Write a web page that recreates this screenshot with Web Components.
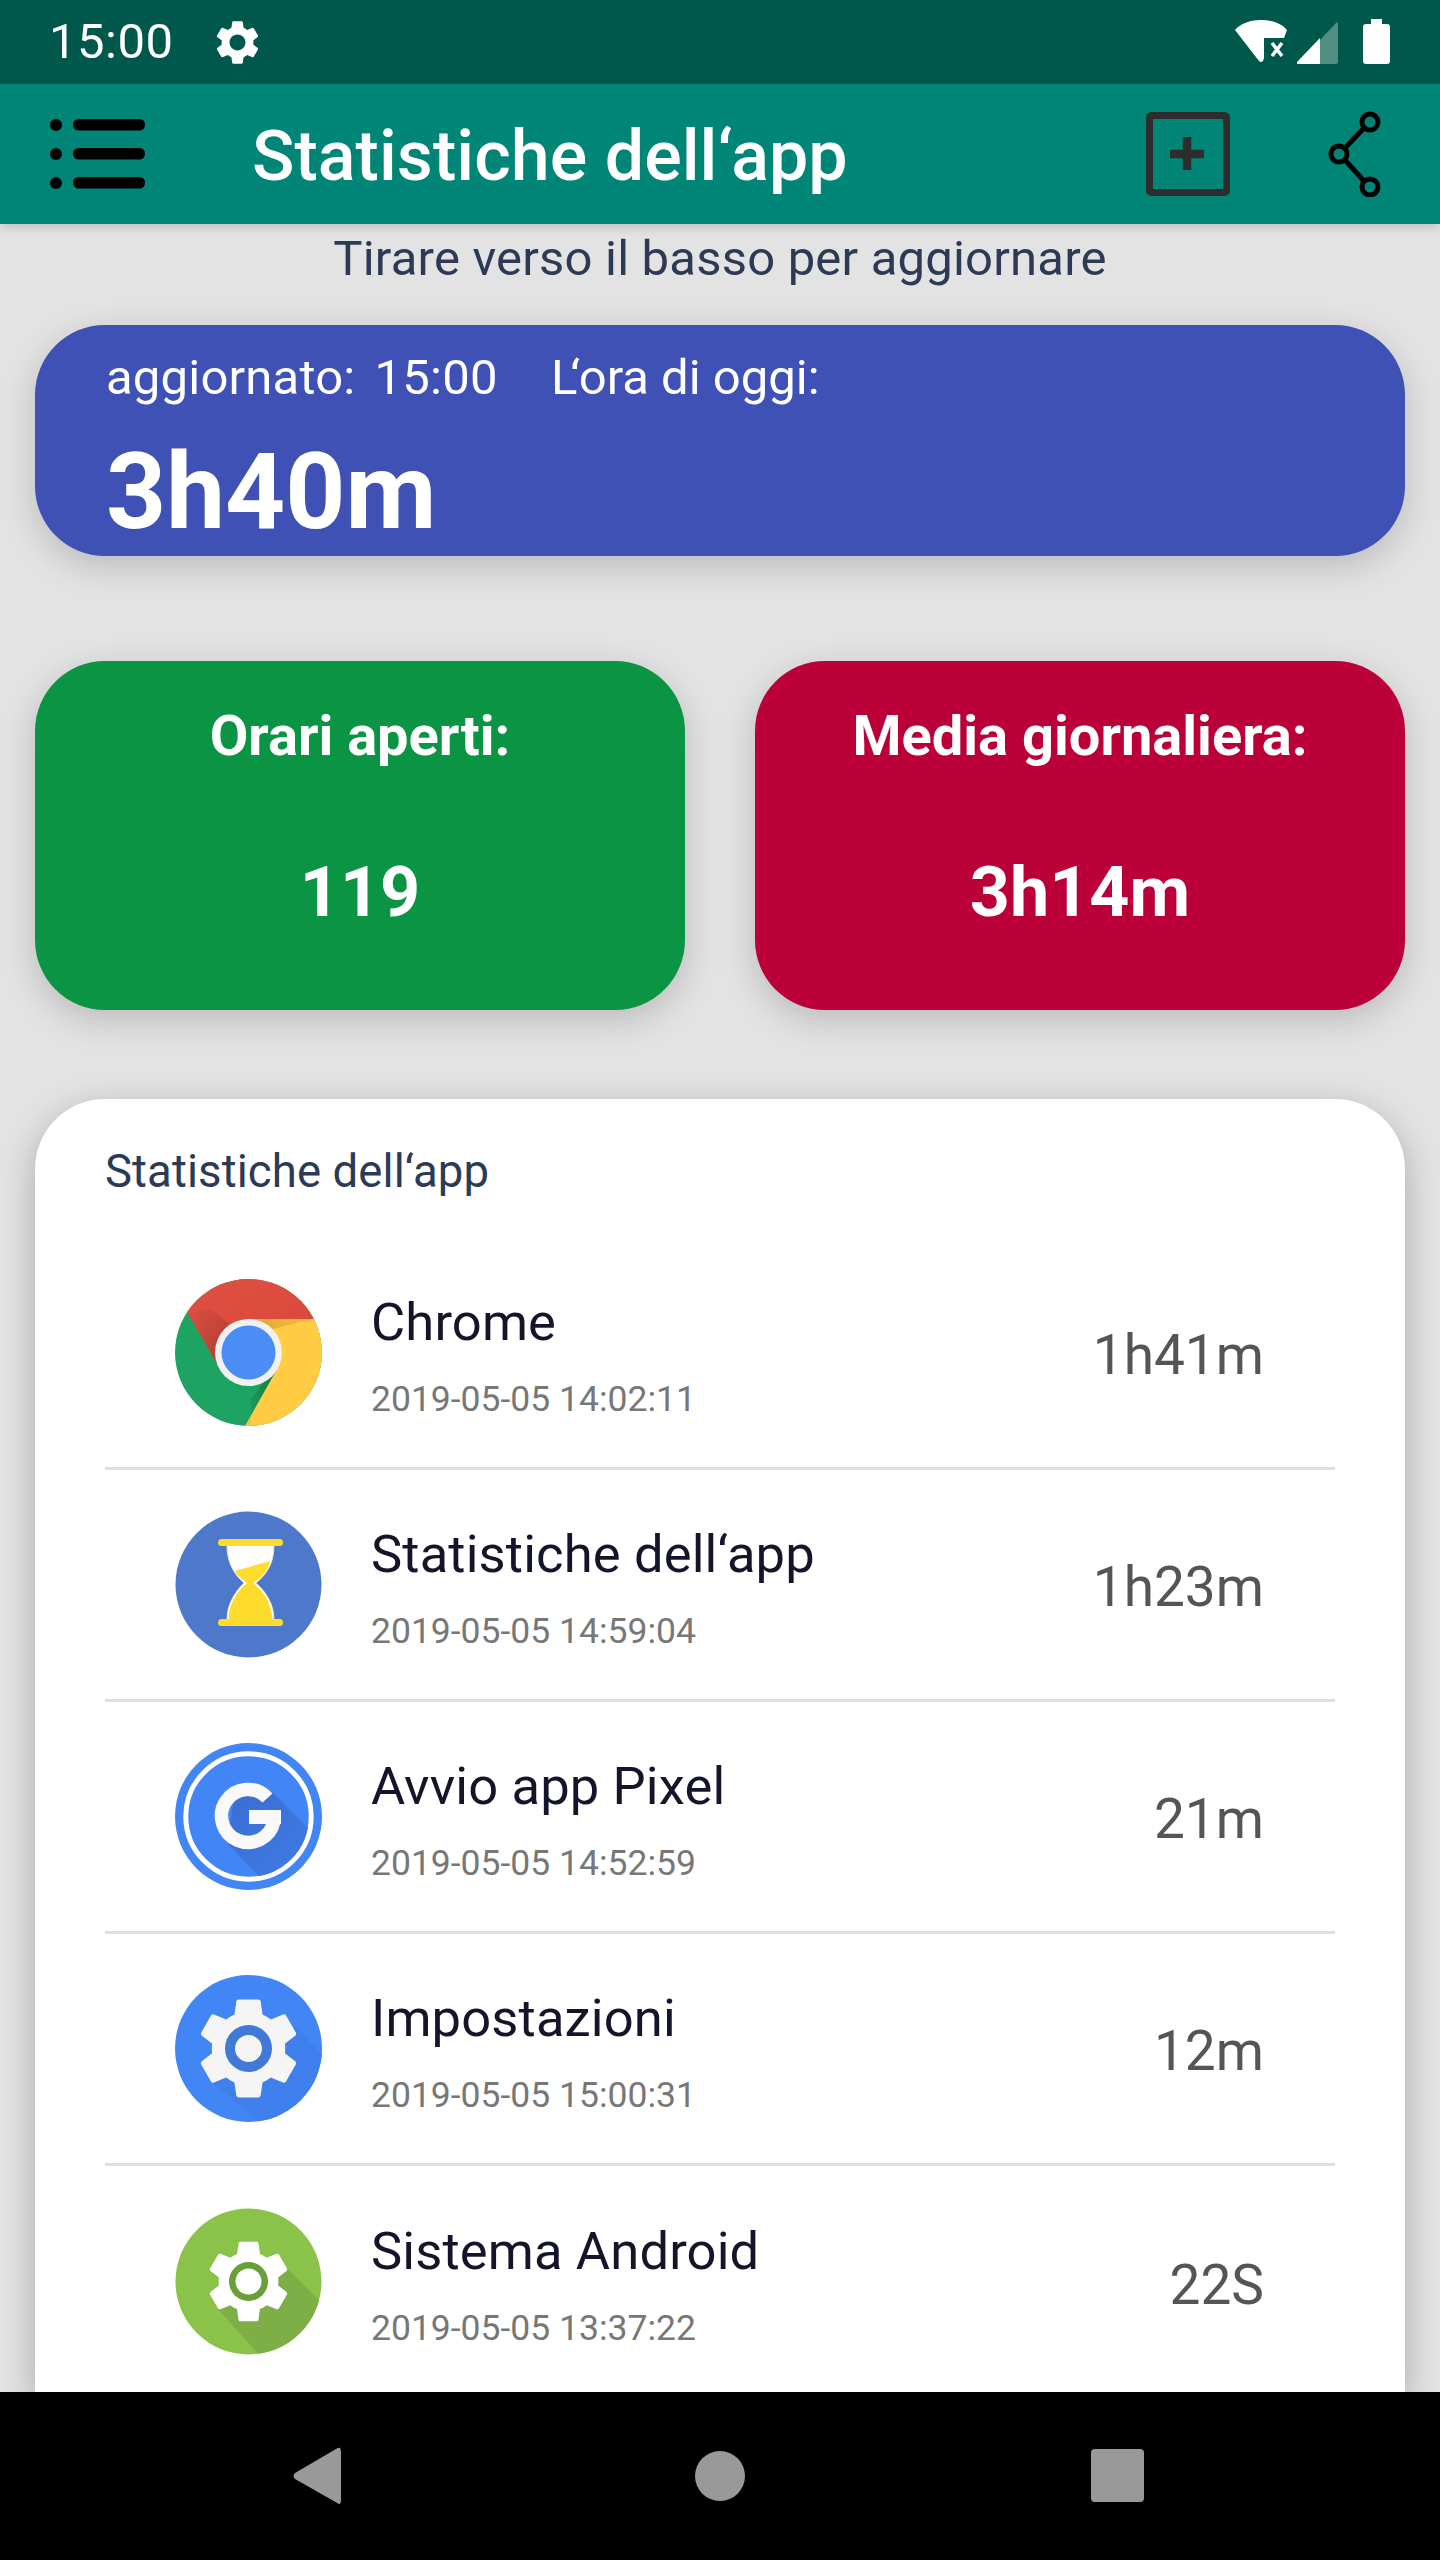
<!DOCTYPE html>
<html lang="it">
<head>
<meta charset="utf-8">
<title>Statistiche dell'app</title>
<style>
  html, body { margin: 0; padding: 0; background: #e3e3e3; }
  body { font-family: Roboto, "Liberation Sans", sans-serif; }
</style>
</head>
<body>
<app-shell>
  <status-bar slot="status"></status-bar>
  <app-toolbar slot="toolbar" heading="Statistiche dell‘app"></app-toolbar>

  <pull-hint>Tirare verso il basso per aggiornare</pull-hint>
  <hero-card updated="15:00" label="‘ora di oggi:" value="3h40m"></hero-card>
  <stat-row>
    <stat-card color="#0b9444" label="Orari aperti:" value="119"></stat-card>
    <stat-card color="#bb0039" label="Media giornaliera:" value="3h14m"></stat-card>
  </stat-row>
  <usage-card heading="Statistiche dell‘app">
    <usage-row name="Chrome" date="2019-05-05 14:02:11" time="1h41m"><app-icon kind="chrome"></app-icon></usage-row>
    <usage-row name="Statistiche dell‘app" date="2019-05-05 14:59:04" time="1h23m"><app-icon kind="hourglass"></app-icon></usage-row>
    <usage-row name="Avvio app Pixel" date="2019-05-05 14:52:59" time="21m"><app-icon kind="pixel"></app-icon></usage-row>
    <usage-row name="Impostazioni" date="2019-05-05 15:00:31" time="12m"><app-icon kind="settings"></app-icon></usage-row>
    <usage-row name="Sistema Android" date="2019-05-05 13:37:22" time="22S"><app-icon kind="android"></app-icon></usage-row>
  </usage-card>

  <nav-bar slot="nav"></nav-bar>
</app-shell>

<script>
const GEAR = 'M19.14 12.94c.04-.3.06-.61.06-.94 0-.32-.02-.64-.07-.94l2.03-1.58c.18-.14.23-.41.12-.61l-1.92-3.32c-.12-.22-.37-.29-.59-.22l-2.39.96c-.5-.38-1.03-.7-1.62-.94l-.36-2.54c-.04-.24-.24-.41-.48-.41h-3.84c-.24 0-.43.17-.47.41l-.36 2.54c-.59.24-1.13.57-1.62.94l-2.39-.96c-.22-.08-.47 0-.59.22L2.74 8.87c-.12.21-.08.47.12.61l2.03 1.58c-.05.3-.09.63-.09.94s.02.64.07.94l-2.03 1.58c-.18.14-.23.41-.12.61l1.92 3.32c.12.22.37.29.59.22l2.39-.96c.5.38 1.03.7 1.62.94l.36 2.54c.05.24.24.41.48.41h3.84c.24 0 .44-.17.47-.41l.36-2.54c.59-.24 1.13-.56 1.62-.94l2.39.96c.22.08.47 0 .59-.22l1.92-3.32c.12-.22.07-.47-.12-.61l-2.01-1.58z';

class AppShell extends HTMLElement {
  connectedCallback() {
    this.attachShadow({ mode: 'open' });
    this.shadowRoot.innerHTML = `
      <style>
        :host { display: flex; flex-direction: column; width: 1440px; height: 2560px; overflow: hidden; background: #e3e3e3; }
        .top { position: relative; z-index: 2; box-shadow: 0 3px 10px rgba(0,0,0,.16); }
        main { flex: 1; min-height: 0; overflow: hidden; }
      </style>
      <div class="top"><slot name="status"></slot><slot name="toolbar"></slot></div>
      <main><slot></slot></main>
      <slot name="nav"></slot>
    `;
  }
}

class StatusBar extends HTMLElement {
  connectedCallback() {
    this.attachShadow({ mode: 'open' });
    this.shadowRoot.innerHTML = `
      <style>
        :host { display: flex; align-items: center; height: 84px; padding: 0 50px 0 49px; box-sizing: border-box; background: #00574b; color: #fff; font: 400 49px Roboto, sans-serif; }
        .time { line-height: 84px; letter-spacing: .5px; }
        .gear { width: 53px; height: 53px; margin-left: 37px; margin-top: 1px; }
        .right { margin-left: auto; width: 155px; height: 84px; display: block; }
      </style>
      <span class="time">15:00</span>
      <svg class="gear" viewBox="0 0 24 24"><path fill="#fff" fill-rule="evenodd" d="${GEAR}M12 15.6c-1.98 0-3.6-1.62-3.6-3.6s1.62-3.6 3.6-3.6 3.6 1.62 3.6 3.6-1.62 3.6-3.6 3.6z"/></svg>
      <svg class="right" viewBox="1235 0 155 84">
        <path fill="#fff" d="M1235 30 C1241 23 1251 20 1261 20 C1271 20 1281 23 1287 30 L1284 38 H1264 V58 L1263 61 Q1261 63 1259 61 Z"/>
        <path stroke="#fff" stroke-width="3.5" d="M1272 43 L1282 56 M1282 43 L1272 56"/>
        <path fill="#fff" fill-opacity=".32" d="M1320 40 L1336 23 Q1338 21 1338 24 V62 Q1338 64 1336 64 H1320 Z"/>
        <path fill="#fff" d="M1297 64 V62 L1320 38 V64 Z"/>
        <path fill="#fff" d="M1371 19 H1382 V24 H1387 Q1390 24 1390 27 V61 Q1390 64 1387 64 H1366 Q1363 64 1363 61 V27 Q1363 24 1366 24 H1371 Z"/>
      </svg>
    `;
  }
}

class AppToolbar extends HTMLElement {
  connectedCallback() {
    this.attachShadow({ mode: 'open' });
    this.shadowRoot.innerHTML = `
      <style>
        :host { display: flex; align-items: center; height: 140px; background: #008577; padding-left: 50px; box-sizing: border-box; }
        svg { display: block; flex: none; }
        h1 { flex: 1; margin: 0 0 0 107px; padding-top: 5px; color: #fff; font: 500 70px/135px Roboto, sans-serif; letter-spacing: .05px; }
        .add { width: 84px; height: 84px; margin-right: 96px; }
        .share { width: 56px; height: 86px; margin-right: 58px; }
      </style>
      <svg width="95" height="70" viewBox="0 0 95 70" style="margin-top:-1px">
        <g fill="#000">
          <circle cx="6" cy="6" r="6"/><circle cx="6" cy="35" r="6"/><circle cx="6" cy="64" r="6"/>
          <rect x="23" y="0" width="72" height="11.5" rx="5.5"/>
          <rect x="23" y="29" width="72" height="11.5" rx="5.5"/>
          <rect x="23" y="58" width="72" height="11.5" rx="5.5"/>
        </g>
      </svg>
      <h1>${this.getAttribute('heading')}</h1>
      <svg class="add" viewBox="0 0 84 84">
        <rect x="3.5" y="3.5" width="77" height="77" rx="2" fill="none" stroke="#2d2d2d" stroke-width="7"/>
        <path d="M41 25 V58 M24 42 H58" stroke="#2d2d2d" stroke-width="8.5" fill="none"/>
      </svg>
      <svg class="share" viewBox="0 0 56 86">
        <g fill="none" stroke="#000" stroke-width="5">
          <path d="M19 37 L38 17 M19 49 L38 70"/>
          <circle cx="13" cy="43" r="8"/>
          <circle cx="44" cy="11" r="8"/>
          <circle cx="44" cy="76" r="8"/>
        </g>
      </svg>
    `;
  }
}

class PullHint extends HTMLElement {
  connectedCallback() {
    this.attachShadow({ mode: 'open' });
    this.shadowRoot.innerHTML = `
      <style>
        :host { display: block; text-align: center; color: #2c3a55; font: 400 49px/70px Roboto, sans-serif; letter-spacing: .2px; margin-bottom: 31px; }
      </style>
      <slot></slot>
    `;
  }
}

class HeroCard extends HTMLElement {
  connectedCallback() {
    this.attachShadow({ mode: 'open' });
    this.shadowRoot.innerHTML = `
      <style>
        :host { display: block; margin: 0 35px; height: 231px; box-sizing: border-box; padding: 18px 71px 0; border-radius: 70px; background: #3f51b5; color: #fff; box-shadow: 0 10px 35px rgba(0,0,0,.18); }
        .line { display: flex; font: 400 49px/70px Roboto, sans-serif; letter-spacing: .2px; }
        .line span:nth-child(2) { margin-left: 19px; letter-spacing: .3px; }
        .line span:nth-child(3) { margin-left: 53px; letter-spacing: 0; }
        .tight { letter-spacing: -7px !important; }
        .value { font: 700 105px/105px Roboto, sans-serif; margin-top: 27px; }
      </style>
      <div class="line"><span>aggiornato:</span><span>${this.getAttribute('updated')}</span><span><span class="tight">L</span>${this.getAttribute('label')}</span></div>
      <div class="value">${this.getAttribute('value')}</div>
    `;
  }
}

class StatRow extends HTMLElement {
  connectedCallback() {
    this.attachShadow({ mode: 'open' });
    this.shadowRoot.innerHTML = `
      <style>
        :host { display: grid; grid-template-columns: 1fr 1fr; gap: 70px; margin: 105px 35px 89px; }
      </style>
      <slot></slot>
    `;
  }
}

class StatCard extends HTMLElement {
  connectedCallback() {
    this.attachShadow({ mode: 'open' });
    this.shadowRoot.innerHTML = `
      <style>
        :host { display: block; height: 349px; box-sizing: border-box; padding-top: 40px; border-radius: 70px; text-align: center; color: #fff; background: ${this.getAttribute('color')}; box-shadow: 0 10px 35px rgba(0,0,0,.18); }
        .label { font: 700 56px/70px Roboto, sans-serif; }
        .value { font: 700 70px/80px Roboto, sans-serif; margin-top: 81px; }
      </style>
      <div class="label">${this.getAttribute('label')}</div>
      <div class="value">${this.getAttribute('value')}</div>
    `;
  }
}

class UsageCard extends HTMLElement {
  connectedCallback() {
    this.attachShadow({ mode: 'open' });
    this.shadowRoot.innerHTML = `
      <style>
        :host { display: block; margin: 0 35px; padding: 41px 70px 0; background: #fff; border-radius: 70px 70px 0 0; box-shadow: 0 10px 35px rgba(0,0,0,.25); }
        h2 { margin: 0 0 34px; color: #2c3a55; font: 400 45.5px/64px Roboto, sans-serif; letter-spacing: .1px; }
      </style>
      <h2>${this.getAttribute('heading')}</h2>
      <slot></slot>
    `;
  }
}

class UsageRow extends HTMLElement {
  connectedCallback() {
    this.attachShadow({ mode: 'open' });
    this.shadowRoot.innerHTML = `
      <style>
        :host { display: flex; align-items: center; height: 232px; box-sizing: border-box; padding: 0 71px 3px 70px; border-bottom: 3px solid #e0e0e0; }
        :host(:last-child) { border-bottom: 0; }
        .text { margin-left: 49px; flex: 1; padding-top: 8px; }
        .name { color: #14142b; font: 400 52.5px/70px Roboto, sans-serif; letter-spacing: .15px; }
        .date { color: #777; font: 400 35.5px/50px Roboto, sans-serif; margin-top: 17px; }
        .time { color: #555; font: 400 55px/70px Roboto, sans-serif; padding-top: 8px; }
      </style>
      <slot></slot>
      <div class="text">
        <div class="name">${this.getAttribute('name')}</div>
        <div class="date">${this.getAttribute('date')}</div>
      </div>
      <div class="time">${this.getAttribute('time')}</div>
    `;
  }
}

const ICONS = {
  chrome: `
    <defs><clipPath id="c"><circle cx="73.5" cy="73.5" r="73.5"/></clipPath>
      <linearGradient id="r" x1="0" y1="0" x2="1" y2="1"><stop offset="0" stop-color="#e05244"/><stop offset="1" stop-color="#d84537"/></linearGradient>
      <linearGradient id="s" x1="1" y1="1" x2="0" y2="0"><stop offset=".2" stop-color="#9c382f" stop-opacity=".6"/><stop offset="1" stop-color="#9c382f" stop-opacity="0"/></linearGradient>
      <linearGradient id="y" x1="0" y1="0" x2="1" y2="0"><stop offset="0" stop-color="#e0a52f"/><stop offset="1" stop-color="#f8bd3c"/></linearGradient>
      <linearGradient id="d" x1="1" y1="0" x2="0" y2="1"><stop offset="0" stop-color="#0f6e39" stop-opacity=".8"/><stop offset="1" stop-color="#0f6e39" stop-opacity="0"/></linearGradient></defs>
    <g clip-path="url(#c)">
      <circle cx="73.5" cy="73.5" r="74" fill="#1da462"/>
      <path d="M138 40 L160 60 L120 160 L70 147 L102 90 L73.5 40 Z" fill="#ffcc44"/>
      <path d="M73.5 40 H138 L98 50 L88 48 Z" fill="url(#y)"/>
      <path d="M12 33 L0 0 H147 V20 L138 40 H73.5 L44 88 Z" fill="url(#r)"/>
      <path d="M12 33 L44 88 L58 48 L36 30 Z" fill="url(#s)"/>
      <path d="M70 147 L102 90 L88 104 L76 120 L76 147 Z" fill="url(#d)"/>
    </g>
    <circle cx="73.5" cy="73.5" r="33.5" fill="#f1f1f1"/>
    <circle cx="73.5" cy="73.5" r="27" fill="#4a8ef5"/>`,
  hourglass: `
    <circle cx="73.5" cy="73.5" r="73" fill="#4e79cb"/>
    <path d="M52 34 C52 52 59 63 69 72 C59 82 52 94 52 109 H99 C99 94 92 82 81 72 C92 63 99 52 99 34 Z" fill="#fff" stroke="#e8e6c8" stroke-width="1"/>
    <path d="M60 60 L95 50 C93 60 87 66 78 72 C90 81 97 94 97.500 109 H53.500 C53.500 94 61 81 72 72 C66 68 62 64 60 60 Z" fill="#fddc2e"/>
    <rect x="43" y="28" width="65" height="7" rx="3.5" fill="#fddc2e"/>
    <rect x="43" y="108" width="65" height="7" rx="3.5" fill="#fddc2e"/>`,
  pixel: `
    <defs><clipPath id="c"><circle cx="73.5" cy="73.5" r="60.5"/></clipPath>
      <linearGradient id="g" x1="0" y1="0" x2="1" y2="1"><stop offset="0" stop-color="#3a6dd2"/><stop offset="1" stop-color="#3f7ce6"/></linearGradient></defs>
    <circle cx="73.5" cy="73.5" r="73.5" fill="#4285f4"/>
    <circle cx="73.5" cy="73.5" r="62.7" fill="none" stroke="#fff" stroke-width="5"/>
    <path clip-path="url(#c)" d="M97 49 L140 92 L120 135 L85 134 L52 100 L60 50 Z" fill="url(#g)"/>
    <path d="M92.5 55 A26.5 26.5 0 1 0 99 78" fill="none" stroke="#f9f9f9" stroke-width="13.5"/>
    <rect x="74" y="67" width="32" height="14" fill="#f9f9f9"/>
    <rect x="104" y="67" width="2" height="8" fill="#f9f9f9"/>`,
  settings: `
    <defs><clipPath id="c"><circle cx="73.5" cy="73.5" r="73.5"/></clipPath></defs>
    <circle cx="73.5" cy="73.5" r="73.5" fill="#4285f4"/>
    <path clip-path="url(#c)" d="M120 52 L165 97 L100 160 L32 103 Z" fill="#3f80ec"/>
    <g transform="translate(12.3 12.3) scale(5.1)"><path fill="#f5f5f5" d="${GEAR}"/></g>
    <circle cx="73.5" cy="73.5" r="23.5" fill="#4179d6"/>
    <circle cx="73.5" cy="73.5" r="13.5" fill="#f5f5f5"/>`,
  android: `
    <defs><clipPath id="c"><circle cx="73.5" cy="73.5" r="73"/></clipPath></defs>
    <circle cx="73.5" cy="73.5" r="73" fill="#8bc34a"/>
    <path clip-path="url(#c)" d="M113 61 L165 113 L130 170 L84 147 L43 101 Z" fill="#7eaf46"/>
    <g transform="translate(23.7 23.7) scale(4.15)"><path fill="#fff" d="${GEAR}"/></g>
    <circle cx="73.5" cy="73.5" r="19.5" fill="#689f38"/>
    <circle cx="73.5" cy="73.5" r="13" fill="#fff"/>`
};

class AppIcon extends HTMLElement {
  connectedCallback() {
    this.attachShadow({ mode: 'open' });
    this.shadowRoot.innerHTML = `
      <style>
        :host { display: block; flex: none; width: 147px; height: 147px; margin-top: 2px; }
        svg { display: block; width: 147px; height: 147px; }
      </style>
      <svg viewBox="0 0 147 147">${ICONS[this.getAttribute('kind')]}</svg>
    `;
  }
}

class NavBar extends HTMLElement {
  connectedCallback() {
    this.attachShadow({ mode: 'open' });
    this.shadowRoot.innerHTML = `
      <style>
        :host { display: block; height: 168px; background: #000; position: relative; z-index: 2; }
        svg { display: block; }
      </style>
      <svg width="1440" height="168" viewBox="0 0 1440 168">
        <path fill="#999" d="M340 56 Q341 58 341 60 V108 Q341 112 339 112 L295 87 Q292 84 295 81 L336 57 Q339 55 340 56 Z"/>
        <circle cx="720" cy="84" r="25" fill="#999"/>
        <rect x="1091" y="57" width="53" height="53" rx="4" fill="#999"/>
      </svg>
    `;
  }
}

customElements.define('app-shell', AppShell);
customElements.define('status-bar', StatusBar);
customElements.define('app-toolbar', AppToolbar);
customElements.define('pull-hint', PullHint);
customElements.define('hero-card', HeroCard);
customElements.define('stat-row', StatRow);
customElements.define('stat-card', StatCard);
customElements.define('usage-card', UsageCard);
customElements.define('usage-row', UsageRow);
customElements.define('app-icon', AppIcon);
customElements.define('nav-bar', NavBar);
</script>
</body>
</html>
